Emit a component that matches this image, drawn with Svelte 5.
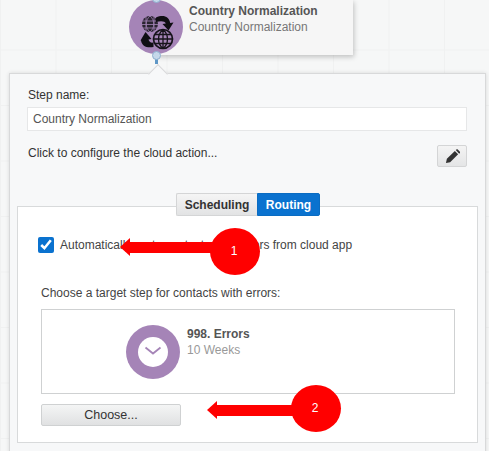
<script>
  let name = $state('Country Normalization');
  let autoRoute = $state(true);
  let activeTab = $state('Routing');
  const tabs = ['Scheduling', 'Routing'];
</script>

<div class="page">
  <div class="node">
    <div class="node-card">
      <strong>Country Normalization</strong>
      <span>Country Normalization</span>
    </div>
    <div class="node-circle">
      <svg viewBox="0 0 54 54" width="54" height="54">
        <circle cx="21" cy="24" r="8" fill="#2a2430" />
        <path d="M13 21h16M13 24.500h16M13 28h16M21 16c-5 4-5 12 0 16M21 16c5 4 5 12 0 16M17 16.500v15M25 16.500v15" fill="none" stroke="#a584b7" stroke-width="0.8" />
        <g fill="none" stroke="#16131a" stroke-width="1.3">
          <circle cx="34" cy="39" r="9.500" stroke-width="1.700" />
          <path d="M24.500 39h19M26 34.500h16M26 43.500h16M34 29.500v19M34 29.500c-6 5-6 14 0 19M34 29.500c6 5 6 14 0 19" />
        </g>
        <path d="M27 17.500c7-3 13-1.500 14.200 5.500l3.300-.500-5 8-6-6.500 3.300-.500c-.800-2.400-4.800-2.700-9.800-1.500z" fill="#100e13" />
        <path d="M24.500 47c-6.500 1.200-11.500-.500-12.500-6.500l-.500 0 5-8.500 6 7-3 .500c.600 2.500 2.500 3.500 5 3z" fill="#100e13" />
      </svg>
    </div>
    <div class="port port-top"></div>
    <div class="port-line"></div>
    <div class="port port-bottom"></div>
  </div>

  <div class="panel">
    <div class="notch"></div>
    <label class="field-label" for="step-name">Step name:</label>
    <input id="step-name" class="name-input" bind:value={name} />

    <div class="configure">
      <span>Click to configure the cloud action...</span>
      <button class="edit-btn" aria-label="Edit">
        <svg viewBox="0 0 16 16" width="15" height="15">
          <path d="M1 15l1-4.500 8.500-8.500 3.500 3.500-8.500 8.500zM11.500 1l.700-.500c.500-.300 1-.300 1.400.100l2.300 2.300c.400.400.400 1 0 1.400l-.800.700z" fill="#333" />
        </svg>
      </button>
    </div>

    <div class="tab-box">
      <div class="tabs">
        {#each tabs as tab}
          <button class="tab" class:active={activeTab === tab} onclick={() => (activeTab = tab)}>{tab}</button>
        {/each}
      </div>

      <label class="auto-route">
        <input type="checkbox" bind:checked={autoRoute} />
        <span>Automatically route contacts with errors from cloud app</span>
      </label>

      <p class="target-label">Choose a target step for contacts with errors:</p>

      <div class="target-box">
        <div class="target-circle">
          <div class="clock">
            <svg viewBox="0 0 30 30" width="30" height="30">
              <path d="M7.500 10.500L15 16.500l7.500-6" fill="none" stroke="#a584b7" stroke-width="1.800" />
            </svg>
          </div>
        </div>
        <div class="target-text">
          <strong>998. Errors</strong>
          <span>10 Weeks</span>
        </div>
      </div>

      <button class="choose-btn">Choose...</button>
    </div>
  </div>

  <!-- callouts sit on top of the form -->
  <div class="callout callout-1">
    <div class="arrow-line"></div>
    <div class="arrow-head"></div>
    <div class="bubble">1</div>
  </div>
  <div class="callout callout-2">
    <div class="arrow-line"></div>
    <div class="arrow-head"></div>
    <div class="bubble">2</div>
  </div>
</div>

<style>
  :global(body) {
    margin: 0;
    font-family: "Liberation Sans", Arial, sans-serif;
  }

  .page {
    position: relative;
    width: 489px;
    height: 451px;
    overflow: hidden;
    box-sizing: border-box;
    padding: 73px 3px 0 9px;
    background-color: #f6f7f7;
    background-image:
      linear-gradient(to right, #f0f1f1 1px, transparent 1px),
      linear-gradient(to bottom, #f0f1f1 1px, transparent 1px);
    background-size: 55.5px 55.5px;
    background-position: 0 -6px;
  }

  .node {
    position: absolute;
    left: 129px;
    top: 0;
    width: 225px;
    height: 73px;
  }

  .node-card {
    position: absolute;
    left: 27px;
    top: 0;
    width: 197px;
    height: 55px;
    box-sizing: border-box;
    padding: 3px 0 0 33px;
    background: #f6f6f6;
    box-shadow: 1px 2px 5px rgba(0, 0, 0, 0.22);
    display: flex;
    flex-direction: column;
    font-size: 12px;
    line-height: 16px;
  }

  .node-card strong {
    color: #555;
  }

  .node-card span {
    color: #777;
  }

  .node-circle {
    position: absolute;
    left: 0;
    top: 0;
    width: 54px;
    height: 54px;
    border-radius: 50%;
    background: #a584b7;
  }

  .port {
    position: absolute;
    width: 7px;
    height: 7px;
    border-radius: 50%;
    background: #c5d8ea;
    border: 1px solid #8eb0cf;
  }

  .port-top {
    left: 23px;
    top: -6px;
  }

  .port-bottom {
    left: 23px;
    top: 51px;
  }

  .port-line {
    position: absolute;
    left: 26px;
    top: 58px;
    width: 3px;
    height: 6px;
    background: #5f97c6;
  }

  .panel {
    position: relative;
    height: 400px;
    box-sizing: border-box;
    padding: 14px 18px 0 7px;
    background: #f7f8f9;
    border: 1px solid #d8d9da;
    box-shadow: 0 0 4px rgba(0, 0, 0, 0.12);
    font-size: 12px;
    color: #333;
  }

  .notch {
    position: absolute;
    left: 141px;
    top: -7px;
    width: 13px;
    height: 13px;
    background: #f7f8f9;
    border-left: 1px solid #d8d9da;
    border-top: 1px solid #d8d9da;
    transform: rotate(45deg);
  }

  .field-label {
    display: block;
    margin-left: 11px;
    line-height: 14px;
  }

  .name-input {
    display: block;
    width: 440px;
    height: 24px;
    box-sizing: border-box;
    margin: 5px 0 0 10px;
    padding: 0 5px;
    border: 1px solid #e6e7e8;
    background: #fff;
    color: #555;
    font: 12px "Liberation Sans", Arial, sans-serif;
    outline: none;
  }

  .configure {
    display: flex;
    justify-content: space-between;
    align-items: flex-start;
    margin: 14px 0 0 11px;
    width: 439px;
    line-height: 16px;
  }

  .edit-btn {
    width: 30px;
    height: 22px;
    padding: 0;
    display: flex;
    align-items: center;
    justify-content: center;
    border: 1px solid #d4d5d6;
    border-radius: 2px;
    background: linear-gradient(#f4f4f4, #e4e5e6);
  }

  .tab-box {
    position: relative;
    box-sizing: border-box;
    width: 461px;
    height: 237px;
    margin: 39px 0 0 0;
    padding: 30px 23px 0 23px;
    background: #fff;
    border: 1px solid #d8dadb;
  }

  .tabs {
    position: absolute;
    left: 158px;
    top: -14px;
    display: flex;
    height: 23px;
  }

  .tab {
    padding: 0;
    border: 1px solid #d4d5d6;
    border-right: 0;
    border-radius: 2px 0 0 2px;
    width: 81px;
    background: linear-gradient(#f5f5f5, #e2e3e4);
    color: #333;
    font: bold 12px "Liberation Sans", Arial, sans-serif;
  }

  .tab.active {
    width: 63px;
    border: 1px solid #0a6cc2;
    border-radius: 0 2px 2px 0;
    background: #0a72cf;
    color: #fff;
  }

  .auto-route {
    display: flex;
    align-items: center;
    gap: 6px;
    height: 16px;
    margin-left: -3px;
    color: #444;
  }

  .auto-route input {
    width: 16px;
    height: 16px;
    margin: 0;
    accent-color: #0a72cf;
  }

  .target-label {
    margin: 32px 0 0 0;
    line-height: 16px;
    color: #444;
  }

  .target-box {
    box-sizing: border-box;
    display: flex;
    align-items: flex-start;
    gap: 7px;
    width: 414px;
    height: 85px;
    margin-top: 8px;
    padding: 15px 0 0 84px;
    border: 1px solid #cfd1d2;
    background: #fff;
  }

  .target-circle {
    flex: none;
    width: 54px;
    height: 54px;
    border-radius: 50%;
    background: #a584b7;
    display: flex;
    align-items: center;
    justify-content: center;
  }

  .clock {
    width: 30px;
    height: 30px;
    border-radius: 50%;
    background: #fff;
  }

  .target-text {
    display: flex;
    flex-direction: column;
    line-height: 16px;
    margin-top: 1px;
  }

  .target-text strong {
    color: #555;
  }

  .target-text span {
    color: #999;
  }

  .choose-btn {
    display: block;
    width: 140px;
    height: 22px;
    margin-top: 10px;
    padding: 0;
    border: 1px solid #cfd1d2;
    border-radius: 2px;
    background: linear-gradient(#f4f5f5, #e0e1e2);
    color: #333;
    font: 12.500px "Liberation Sans", Arial, sans-serif;
  }

  .callout {
    position: absolute;
  }

  .callout-1 {
    left: 120px;
    top: 228px;
    width: 140px;
    height: 47px;
    --line-top: 14px;
    --head-top: 10px;
  }

  .callout-2 {
    left: 207px;
    top: 385px;
    width: 134px;
    height: 47px;
    --line-top: 20px;
    --head-top: 16px;
  }

  .arrow-line {
    position: absolute;
    left: 8px;
    top: var(--line-top);
    right: 30px;
    height: 11px;
    background: #f00;
  }

  .arrow-head {
    position: absolute;
    left: 0;
    top: var(--head-top);
    width: 0;
    height: 0;
    border-top: 9.500px solid transparent;
    border-bottom: 9.500px solid transparent;
    border-right: 10px solid #f00;
  }

  .bubble {
    position: absolute;
    right: 0;
    top: 0;
    width: 48px;
    height: 47px;
    padding-right: 2px;
    line-height: 47px;
    border-radius: 50%;
    background: #f00;
    color: #fff;
    font-size: 12px;
    text-align: center;
  }
</style>
